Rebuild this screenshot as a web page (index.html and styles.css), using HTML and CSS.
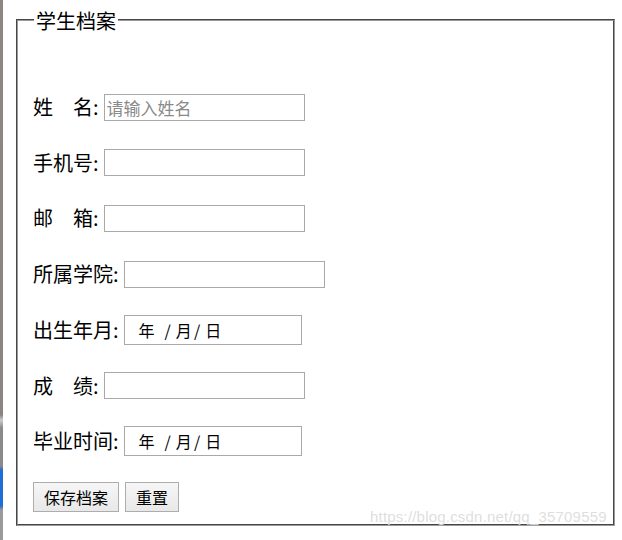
FILE: index.html
```html
<!DOCTYPE html>
<html lang="zh-CN">
<head>
<meta charset="utf-8">
<title>学生档案</title>
<link rel="stylesheet" href="styles.css">
</head>
<body>
<div class="edge"></div>
<main class="main">
  <form class="form" onsubmit="return false">
    <fieldset class="box">
      <legend class="title">学生档案</legend>
      <div class="rows">
        <div class="row"><label class="lbl" for="name">姓　名:</label><input class="txt" id="name" type="text" placeholder="请输入姓名"></div>
        <div class="row"><label class="lbl" for="phone">手机号:</label><input class="txt" id="phone" type="text"></div>
        <div class="row"><label class="lbl" for="mail">邮　箱:</label><input class="txt" id="mail" type="text"></div>
        <div class="row"><label class="lbl" for="college">所属学院:</label><input class="txt" id="college" type="text"></div>
        <div class="row"><label class="lbl">出生年月:</label><span class="date"><span class="seg">年</span><span class="sl s1">/</span><span class="seg">月</span><span class="sl s2">/</span><span class="seg">日</span></span></div>
        <div class="row"><label class="lbl" for="score">成　绩:</label><input class="txt" id="score" type="text"></div>
        <div class="row"><label class="lbl">毕业时间:</label><span class="date"><span class="seg">年</span><span class="sl s1">/</span><span class="seg">月</span><span class="sl s2">/</span><span class="seg">日</span></span></div>
        <div class="row btns"><button class="btn" type="submit">保存档案</button><button class="btn" type="reset">重置</button></div>
      </div>
    </fieldset>
  </form>
  <div class="mark">https://blog.csdn.net/qq_35709559</div>
</main>
</body>
</html>
```
FILE: styles.css
```css
html, body {
  margin: 0;
  padding: 0;
  background: #fff;
}
body {
  display: flex;
  width: 622px;
  height: 540px;
  overflow: hidden;
  font-family: "Noto Sans CJK SC", "Noto Sans", sans-serif;
  color: #000;
}
.edge {
  width: 3px;
  height: 540px;
  flex: none;
  background: linear-gradient(to bottom, #8d8580 0, #8a8582 415px, #c8ccd2 420px, #8a8a8a 428px, #8a8a8a 466px, #1f6fd6 470px, #1f6fd6 506px, #9a9a9a 510px, #9a9a9a 540px);
}
.main {
  position: relative;
  padding: 9px 0 0 13px;
  flex: 1;
}
.form {
  margin: 0;
}
.box {
  box-sizing: border-box;
  width: 599px;
  margin: 0;
  padding: 0 15px 12px 15px;
  border: 2px groove #9a9a9a;
  font-size: 20px;
}
.title {
  padding: 0 2px;
  margin-left: 1px;
  font-size: 20px;
  line-height: 22px;
  position: relative;
  top: 1px;
}
.rows {
  display: flex;
  flex-direction: column;
  gap: 25.71px;
  padding-top: 61px;
}
.row {
  display: flex;
  align-items: center;
  height: 30px;
}
.lbl {
  font-size: 20px;
  line-height: 30px;
  white-space: pre;
  margin-right: 5px;
}
.txt {
  box-sizing: border-box;
  width: 201px;
  height: 27px;
  margin: 0;
  padding: 0 2px;
  border: 1px solid #a9a9a9;
  font-family: "Noto Sans CJK SC", sans-serif;
  font-size: 17px;
  color: #000;
  outline: none;
}
.txt::placeholder {
  color: #8a8a8a;
}
.date {
  box-sizing: border-box;
  display: flex;
  align-items: center;
  width: 178px;
  height: 30px;
  padding-left: 14px;
  border: 1px solid #a9a9a9;
  font-size: 16px;
  line-height: 20px;
}
.s1 {
  margin: 0 5px 0 10px;
}
.s2 {
  margin: 0 5px 0 2px;
}
.btns {
  gap: 6px;
}
.btn {
  box-sizing: border-box;
  height: 30px;
  margin: 0;
  padding: 0 10px;
  border: 1px solid #adadad;
  border-radius: 0;
  background: linear-gradient(#f6f6f6, #e8e8e8);
  font-family: "Noto Sans CJK SC", sans-serif;
  font-size: 16px;
  color: #000;
}
.mark {
  position: absolute;
  left: 367px;
  top: 508px;
  font-family: "Liberation Sans", Arial, sans-serif;
  font-size: 15px;
  color: rgba(200, 200, 200, 0.6);
  text-shadow: 0 0 1px #fff;
  letter-spacing: 0.2px;
  white-space: nowrap;
}
```
